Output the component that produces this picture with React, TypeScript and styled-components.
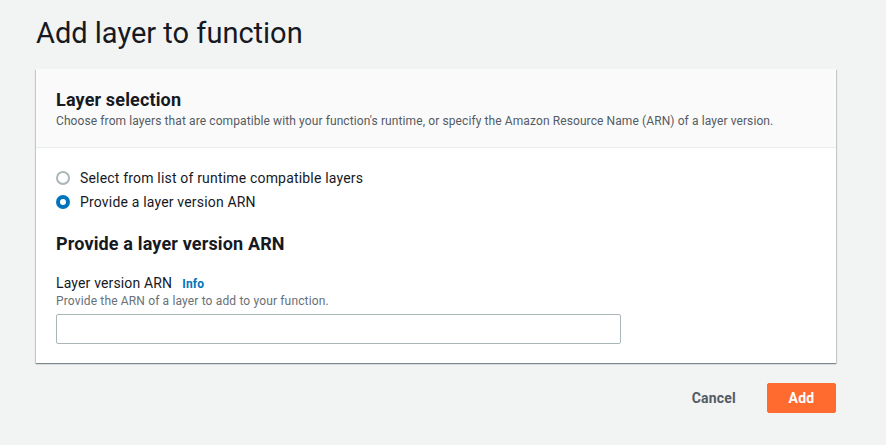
import React from "react";
import styled, { createGlobalStyle } from "styled-components";

const Global = createGlobalStyle`
  html, body { margin: 0; padding: 0; background: #f2f3f3; }
  body { font-family: Roboto, "Liberation Sans", Arial, sans-serif; color: #16191f; -webkit-font-smoothing: antialiased; letter-spacing: 0.15px; }
  * { box-sizing: border-box; }
`;

const Page = styled.div`
  width: 886px;
  height: 445px;
  padding: 15px 50px 0 36px;
  display: flex;
  flex-direction: column;
`;

const Title = styled.h1`
  margin: 0;
  font-size: 29px;
  line-height: 36px;
  font-weight: 400;
  letter-spacing: 0;
  color: #16191f;
`;

const Card = styled.section`
  margin-top: 18px;
  width: 800px;
  background: #fff;
  box-shadow: 0 1px 1px 0 rgba(0, 28, 36, 0.3), 1px 1px 1px 0 rgba(0, 28, 36, 0.15),
    -1px 1px 1px 0 rgba(0, 28, 36, 0.15);
`;

const CardHeader = styled.div`
  background: #fafafa;
  border-bottom: 1px solid #eaeded;
  padding: 20px 20px 18px;
`;

const CardTitle = styled.h2`
  margin: 0;
  font-size: 18px;
  line-height: 22px;
  font-weight: 700;
`;

const CardDesc = styled.p`
  margin: 2px 0 0;
  font-size: 12px;
  line-height: 16px;
  color: #545b64;
  letter-spacing: 0.1px;
`;

const CardBody = styled.div`
  padding: 20px 20px 19px;
  display: flex;
  flex-direction: column;
`;

const RadioGroup = styled.div`
  display: flex;
  flex-direction: column;
  gap: 4px;
`;

const RadioRow = styled.label`
  display: flex;
  align-items: center;
  gap: 10px;
  font-size: 14px;
  line-height: 20px;
  letter-spacing: 0.18px;
  cursor: pointer;
`;

const RadioDot = styled.span<{ $checked?: boolean }>`
  width: 14px;
  height: 14px;
  border-radius: 50%;
  background: #fff;
  border: ${(p) => (p.$checked ? "4px solid #0073bb" : "2px solid #aab7b8")};
  flex: none;
`;

const SubHeading = styled.h3`
  margin: 21px 0 0;
  font-size: 18px;
  line-height: 22px;
  font-weight: 700;
`;

const FieldLabel = styled.div`
  margin-top: 19px;
  font-size: 14px;
  line-height: 18px;
  display: flex;
  align-items: baseline;
  gap: 10px;
`;

const InfoLink = styled.a`
  font-size: 12px;
  font-weight: 700;
  color: #0073bb;
  text-decoration: none;
`;

const FieldDesc = styled.div`
  font-size: 12px;
  line-height: 16px;
  color: #687078;
`;

const Input = styled.input`
  margin-top: 5px;
  width: 565px;
  height: 30px;
  border: 1px solid #aab7b8;
  border-radius: 2px;
  font: inherit;
  font-size: 14px;
  padding: 4px 10px;
  outline: none;
`;

const Actions = styled.div`
  width: 800px;
  margin-top: 20px;
  display: flex;
  justify-content: flex-end;
  align-items: center;
  gap: 11px;
`;

const LinkButton = styled.button`
  background: transparent;
  border: none;
  font-family: inherit;
  font-size: 14px;
  font-weight: 700;
  letter-spacing: 0.2px;
  color: #545b64;
  padding: 4px 20px;
  height: 30px;
  cursor: pointer;
`;

const PrimaryButton = styled.button`
  background: #ff6b2f;
  border: 1px solid #ff6b2f;
  border-radius: 2px;
  color: #fff;
  font-family: inherit;
  font-size: 14px;
  font-weight: 700;
  letter-spacing: 0.2px;
  height: 30px;
  width: 69px;
  cursor: pointer;
`;

export default function App() {
  return (
    <>
      <Global />
      <Page>
        <Title>Add layer to function</Title>
        <Card>
          <CardHeader>
            <CardTitle>Layer selection</CardTitle>
            <CardDesc>
              Choose from layers that are compatible with your function's runtime, or specify the Amazon Resource
              Name (ARN) of a layer version.
            </CardDesc>
          </CardHeader>
          <CardBody>
            <RadioGroup>
              <RadioRow>
                <RadioDot />
                Select from list of runtime compatible layers
              </RadioRow>
              <RadioRow>
                <RadioDot $checked />
                Provide a layer version ARN
              </RadioRow>
            </RadioGroup>
            <SubHeading>Provide a layer version ARN</SubHeading>
            <FieldLabel>
              Layer version ARN <InfoLink href="#">Info</InfoLink>
            </FieldLabel>
            <FieldDesc>Provide the ARN of a layer to add to your function.</FieldDesc>
            <Input type="text" />
          </CardBody>
        </Card>
        <Actions>
          <LinkButton>Cancel</LinkButton>
          <PrimaryButton>Add</PrimaryButton>
        </Actions>
      </Page>
    </>
  );
}
